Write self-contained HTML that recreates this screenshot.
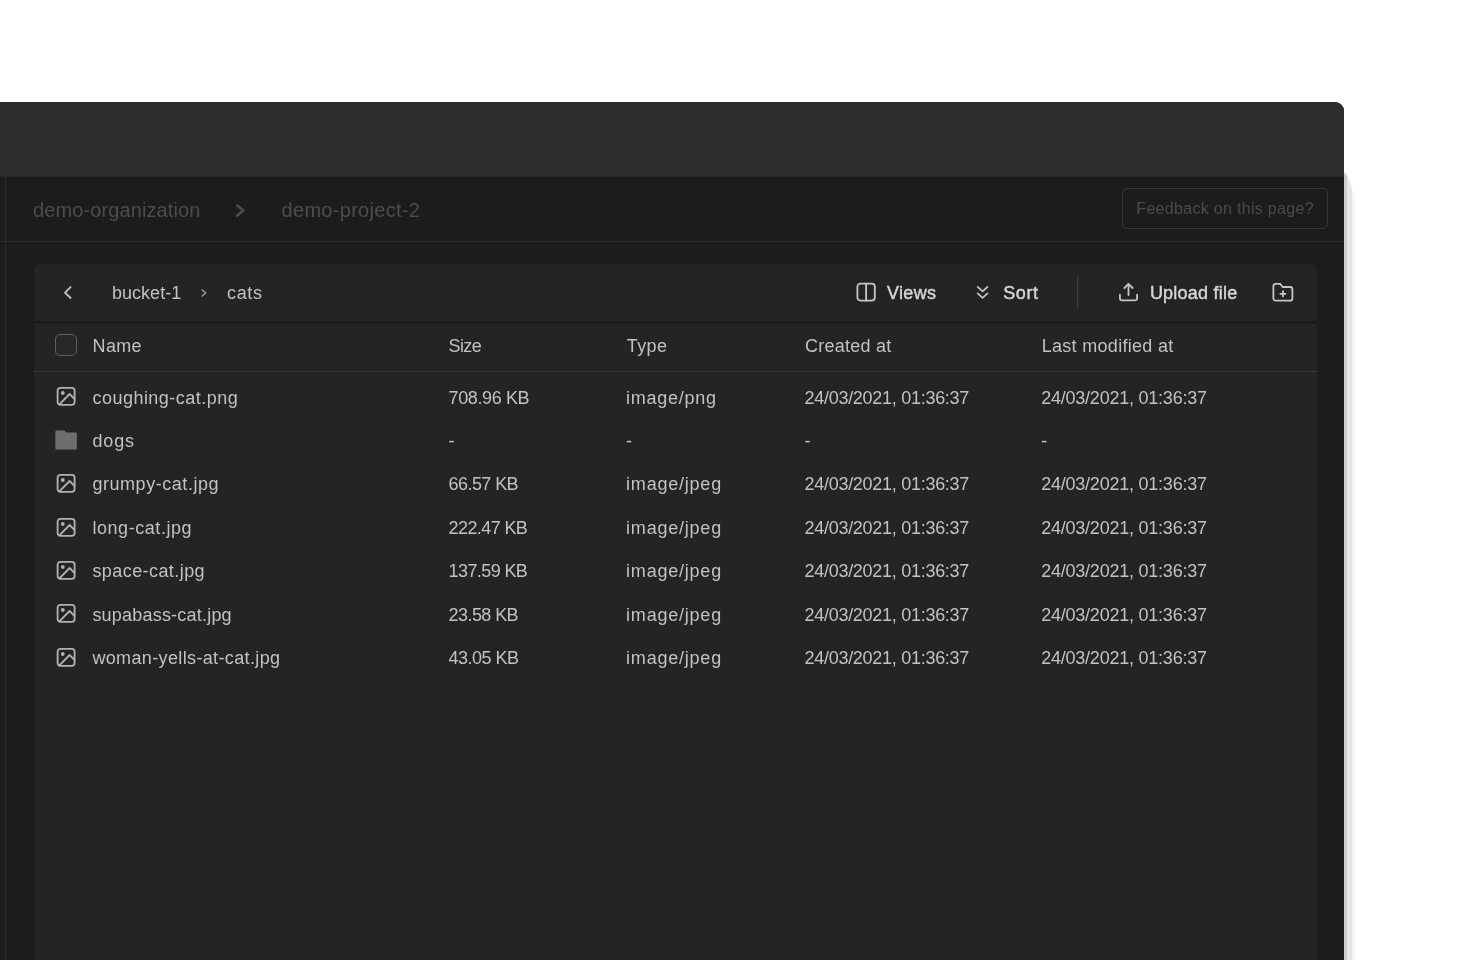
<!DOCTYPE html>
<html>
<head>
<meta charset="utf-8">
<title>Storage</title>
<style>
*{box-sizing:border-box;margin:0;padding:0}
html,body{width:1460px;height:960px;overflow:hidden;background:#fff}
body{font-family:"Liberation Sans",sans-serif;position:relative}
.win{position:absolute;left:0;top:102px;width:1344px;height:900px;background:#1c1c1c;border-top-right-radius:9px;overflow:hidden;will-change:transform}
.shadow{position:absolute;left:1344px;top:173px;width:12px;height:800px;background:linear-gradient(90deg,#cecece 0,#cecece 3px,#e6e6e6 3px,#e6e6e6 8px,#f2f2f2 8px,#f4f4f4 10px,#fafafa 10px,#fcfcfc 12px);clip-path:polygon(0 0,2px 0,100% 26px,100% 100%,0 100%)}
.edge{position:absolute;right:0;top:0;width:1px;height:100%;background:rgba(0,0,0,0);z-index:5}
.titlebar{position:absolute;left:0;top:0;width:100%;height:75px;background:#2f2d30;border-bottom:1px solid #262527}
.vline{position:absolute;left:5px;top:74px;width:1px;height:900px;background:#2c2c2c}
.hline{position:absolute;left:0;top:139px;width:100%;height:1px;background:#2c2c2c}
.crumb,.fbt,.t{position:absolute;white-space:nowrap;line-height:24px}
.crumb{color:#4d4d4d;font-size:20px}
.fbt{color:#4b4b4b;font-size:16px}
.fb{position:absolute;left:1122px;top:86px;width:206px;height:41px;border:1px solid #363638;border-radius:5px}
.card{position:absolute;left:34px;top:162px;width:1283px;height:800px;background:#242424;border-radius:7px 7px 0 0}
.tbline{position:absolute;left:34px;top:219px;width:1283px;height:3px;background:linear-gradient(#1a1a1a 0,#1a1a1a 58%,#1d1d1d 58%,#1d1d1d 100%)}
.hdrline{position:absolute;left:34px;top:269px;width:1283px;height:1px;background:#383838}
.vsep{position:absolute;left:1077px;top:174px;width:1px;height:33px;background:#3c3c3c}
.t{color:#c2c2c2;font-size:18px}
.b{color:#d6d6d6;-webkit-text-stroke:0.45px #d6d6d6}
.cb{position:absolute;left:55px;top:232px;width:22px;height:22px;border:1px solid #606060;border-radius:5px;background:#282828}
svg{position:absolute;overflow:visible}
</style>
</head>
<body>
<div class="shadow"></div>
<div class="win">
  <div class="titlebar"></div>
  <div class="edge"></div>
  <div class="vline"></div>
  <div class="hline"></div>
  <div class="fb"></div>
  <div class="card"></div>
  <div class="tbline"></div>
  <div class="hdrline"></div>
  <div class="vsep"></div>
  <div class="cb"></div>
  <svg style="left:234px;top:99.5px" width="14" height="18" viewBox="0 0 14 18" fill="none" stroke="#4d4d4d" stroke-width="2.6" stroke-linecap="round" stroke-linejoin="round"><polyline points="3.2,3.6 9.4,8.6 3.2,13.6"/></svg>
  <svg style="left:62px;top:182px" width="12" height="18" viewBox="0 0 12 18" fill="none" stroke="#c6c6c6" stroke-width="1.8" stroke-linecap="round" stroke-linejoin="round"><polyline points="8.6,3.2 3,8.6 8.6,14"/></svg>
  <svg style="left:200px;top:186px" width="8" height="10" viewBox="0 0 8 10" fill="none" stroke="#9a9a9a" stroke-width="1.5" stroke-linecap="round" stroke-linejoin="round"><polyline points="2.2,2 5.8,5 2.2,8"/></svg>
  <svg style="left:856px;top:180px" width="20" height="20" viewBox="0 0 20 20" fill="none" stroke="#c6c6c6" stroke-width="1.8" stroke-linecap="round" stroke-linejoin="round"><rect x="1.4" y="1.7" width="17.4" height="16.9" rx="3"/><line x1="10.1" y1="2" x2="10.1" y2="18.4"/></svg>
  <svg style="left:975px;top:183px" width="15" height="15" viewBox="0 0 15 15" fill="none" stroke="#c6c6c6" stroke-width="1.7" stroke-linecap="round" stroke-linejoin="round"><polyline points="2.7,1.9 7.6,6.4 12.5,1.9"/><polyline points="2.7,8.3 7.6,12.8 12.5,8.3"/></svg>
  <svg style="left:1118px;top:180px" width="21" height="20" viewBox="0 0 21 20" fill="none" stroke="#c6c6c6" stroke-width="1.8" stroke-linecap="round" stroke-linejoin="round"><path d="M1.9 12.6v3.4a2.4 2.4 0 0 0 2.4 2.4h12.4a2.4 2.4 0 0 0 2.4-2.4v-3.4"/><polyline points="6.4,6 10.5,1.9 14.6,6"/><line x1="10.5" y1="2.2" x2="10.5" y2="13"/></svg>
  <svg style="left:1272px;top:180px" width="22" height="20" viewBox="0 0 22 20" fill="none" stroke="#c6c6c6" stroke-width="1.8" stroke-linecap="round" stroke-linejoin="round"><path d="M20.4 16.4a2.2 2.2 0 0 1-2.2 2.2h-14.6a2.2 2.2 0 0 1-2.2-2.2v-12.4a2.2 2.2 0 0 1 2.2-2.2h4.6l2.4 3.2h7.6a2.2 2.2 0 0 1 2.2 2.2z"/><line x1="11" y1="9.2" x2="11" y2="14.4"/><line x1="8.4" y1="11.8" x2="13.6" y2="11.8"/></svg>
  <svg style="left:56px;top:284px" width="20" height="20" viewBox="0 0 20 20" fill="none" stroke="#b2b2b2" stroke-width="1.8" stroke-linecap="round" stroke-linejoin="round"><rect x="1.6" y="1.9" width="17" height="17" rx="2.8"/><circle cx="6.8" cy="7" r="1.9" fill="#b2b2b2" stroke="none"/><polyline points="18.4,12.8 13.6,8 3.4,18.4"/></svg>
  <svg style="left:55px;top:328px" width="22" height="20" viewBox="0 0 22 20"><path d="M0.4 2a1.4 1.4 0 0 1 1.4-1.4h7.2a1.4 1.4 0 0 1 1.4 1.4v0.4h10a1.4 1.4 0 0 1 1.4 1.4v14.6a1 1 0 0 1-1 1h-19.4a1 1 0 0 1-1-1z" fill="#6e6e6e"/></svg>
  <svg style="left:56px;top:371px" width="20" height="20" viewBox="0 0 20 20" fill="none" stroke="#b2b2b2" stroke-width="1.8" stroke-linecap="round" stroke-linejoin="round"><rect x="1.6" y="1.9" width="17" height="17" rx="2.8"/><circle cx="6.8" cy="7" r="1.9" fill="#b2b2b2" stroke="none"/><polyline points="18.4,12.8 13.6,8 3.4,18.4"/></svg>
  <svg style="left:56px;top:415px" width="20" height="20" viewBox="0 0 20 20" fill="none" stroke="#b2b2b2" stroke-width="1.8" stroke-linecap="round" stroke-linejoin="round"><rect x="1.6" y="1.9" width="17" height="17" rx="2.8"/><circle cx="6.8" cy="7" r="1.9" fill="#b2b2b2" stroke="none"/><polyline points="18.4,12.8 13.6,8 3.4,18.4"/></svg>
  <svg style="left:56px;top:458px" width="20" height="20" viewBox="0 0 20 20" fill="none" stroke="#b2b2b2" stroke-width="1.8" stroke-linecap="round" stroke-linejoin="round"><rect x="1.6" y="1.9" width="17" height="17" rx="2.8"/><circle cx="6.8" cy="7" r="1.9" fill="#b2b2b2" stroke="none"/><polyline points="18.4,12.8 13.6,8 3.4,18.4"/></svg>
  <svg style="left:56px;top:501px" width="20" height="20" viewBox="0 0 20 20" fill="none" stroke="#b2b2b2" stroke-width="1.8" stroke-linecap="round" stroke-linejoin="round"><rect x="1.6" y="1.9" width="17" height="17" rx="2.8"/><circle cx="6.8" cy="7" r="1.9" fill="#b2b2b2" stroke="none"/><polyline points="18.4,12.8 13.6,8 3.4,18.4"/></svg>
  <svg style="left:56px;top:545px" width="20" height="20" viewBox="0 0 20 20" fill="none" stroke="#b2b2b2" stroke-width="1.8" stroke-linecap="round" stroke-linejoin="round"><rect x="1.6" y="1.9" width="17" height="17" rx="2.8"/><circle cx="6.8" cy="7" r="1.9" fill="#b2b2b2" stroke="none"/><polyline points="18.4,12.8 13.6,8 3.4,18.4"/></svg>
  <div class="crumb" id="c1" style="left:33.0px;top:96.0px;letter-spacing:0.11px">demo-organization</div>
  <div class="crumb" id="c2" style="left:281.6px;top:96.0px;letter-spacing:0.29px">demo-project-2</div>
  <div class="fbt" id="fb" style="left:1136.3px;top:94.5px;letter-spacing:0.31px">Feedback on this page?</div>
  <div class="t" id="bk" style="left:111.9px;top:179.4px;letter-spacing:0.05px">bucket-1</div>
  <div class="t" id="cats" style="left:227.1px;top:179.4px;letter-spacing:0.63px">cats</div>
  <div class="t b" id="views" style="left:886.9px;top:179.4px;letter-spacing:0.35px">Views</div>
  <div class="t b" id="sort" style="left:1003.2px;top:179.4px;letter-spacing:0.59px">Sort</div>
  <div class="t b" id="upl" style="left:1149.9px;top:179.4px;letter-spacing:0.22px">Upload file</div>
  <div class="t h" id="hn" style="left:92.6px;top:232.0px;letter-spacing:0.33px">Name</div>
  <div class="t h" id="hs" style="left:448.5px;top:232.0px;letter-spacing:-0.60px">Size</div>
  <div class="t h" id="ht" style="left:626.8px;top:232.0px;letter-spacing:0.39px">Type</div>
  <div class="t h" id="hc" style="left:804.9px;top:232.0px;letter-spacing:0.27px">Created at</div>
  <div class="t h" id="hm" style="left:1041.7px;top:232.0px;letter-spacing:0.30px">Last modified at</div>
  <div class="t r" id="n0" style="left:92.4px;top:283.5px;letter-spacing:0.49px">coughing-cat.png</div>
  <div class="t r" id="s0" style="left:448.6px;top:283.5px;letter-spacing:-0.38px">708.96 KB</div>
  <div class="t r" id="y0" style="left:626.1px;top:283.5px;letter-spacing:0.74px">image/png</div>
  <div class="t r" id="d0" style="left:804.5px;top:283.5px;letter-spacing:-0.28px">24/03/2021, 01:36:37</div>
  <div class="t r" id="m0" style="left:1041.2px;top:283.5px;letter-spacing:-0.23px">24/03/2021, 01:36:37</div>
  <div class="t r" id="n1" style="left:92.4px;top:326.9px;letter-spacing:0.90px">dogs</div>
  <div class="t r" id="s1" style="left:448.6px;top:326.9px">-</div>
  <div class="t r" id="y1" style="left:626.1px;top:326.9px">-</div>
  <div class="t r" id="d1" style="left:804.5px;top:326.9px">-</div>
  <div class="t r" id="m1" style="left:1041.2px;top:326.9px">-</div>
  <div class="t r" id="n2" style="left:92.4px;top:370.3px;letter-spacing:0.55px">grumpy-cat.jpg</div>
  <div class="t r" id="s2" style="left:448.6px;top:370.3px;letter-spacing:-0.58px">66.57 KB</div>
  <div class="t r" id="y2" style="left:626.1px;top:370.3px;letter-spacing:0.78px">image/jpeg</div>
  <div class="t r" id="d2" style="left:804.5px;top:370.3px;letter-spacing:-0.28px">24/03/2021, 01:36:37</div>
  <div class="t r" id="m2" style="left:1041.2px;top:370.3px;letter-spacing:-0.23px">24/03/2021, 01:36:37</div>
  <div class="t r" id="n3" style="left:92.4px;top:413.7px;letter-spacing:0.56px">long-cat.jpg</div>
  <div class="t r" id="s3" style="left:448.6px;top:413.7px;letter-spacing:-0.60px">222.47 KB</div>
  <div class="t r" id="y3" style="left:626.1px;top:413.7px;letter-spacing:0.78px">image/jpeg</div>
  <div class="t r" id="d3" style="left:804.5px;top:413.7px;letter-spacing:-0.28px">24/03/2021, 01:36:37</div>
  <div class="t r" id="m3" style="left:1041.2px;top:413.7px;letter-spacing:-0.23px">24/03/2021, 01:36:37</div>
  <div class="t r" id="n4" style="left:92.4px;top:457.1px;letter-spacing:0.43px">space-cat.jpg</div>
  <div class="t r" id="s4" style="left:448.6px;top:457.1px;letter-spacing:-0.60px">137.59 KB</div>
  <div class="t r" id="y4" style="left:626.1px;top:457.1px;letter-spacing:0.78px">image/jpeg</div>
  <div class="t r" id="d4" style="left:804.5px;top:457.1px;letter-spacing:-0.28px">24/03/2021, 01:36:37</div>
  <div class="t r" id="m4" style="left:1041.2px;top:457.1px;letter-spacing:-0.23px">24/03/2021, 01:36:37</div>
  <div class="t r" id="n5" style="left:92.4px;top:500.5px;letter-spacing:0.21px">supabass-cat.jpg</div>
  <div class="t r" id="s5" style="left:448.6px;top:500.5px;letter-spacing:-0.58px">23.58 KB</div>
  <div class="t r" id="y5" style="left:626.1px;top:500.5px;letter-spacing:0.78px">image/jpeg</div>
  <div class="t r" id="d5" style="left:804.5px;top:500.5px;letter-spacing:-0.28px">24/03/2021, 01:36:37</div>
  <div class="t r" id="m5" style="left:1041.2px;top:500.5px;letter-spacing:-0.23px">24/03/2021, 01:36:37</div>
  <div class="t r" id="n6" style="left:92.4px;top:543.9px;letter-spacing:0.36px">woman-yells-at-cat.jpg</div>
  <div class="t r" id="s6" style="left:448.6px;top:543.9px;letter-spacing:-0.52px">43.05 KB</div>
  <div class="t r" id="y6" style="left:626.1px;top:543.9px;letter-spacing:0.78px">image/jpeg</div>
  <div class="t r" id="d6" style="left:804.5px;top:543.9px;letter-spacing:-0.28px">24/03/2021, 01:36:37</div>
  <div class="t r" id="m6" style="left:1041.2px;top:543.9px;letter-spacing:-0.23px">24/03/2021, 01:36:37</div>
</div>
</body>
</html>
